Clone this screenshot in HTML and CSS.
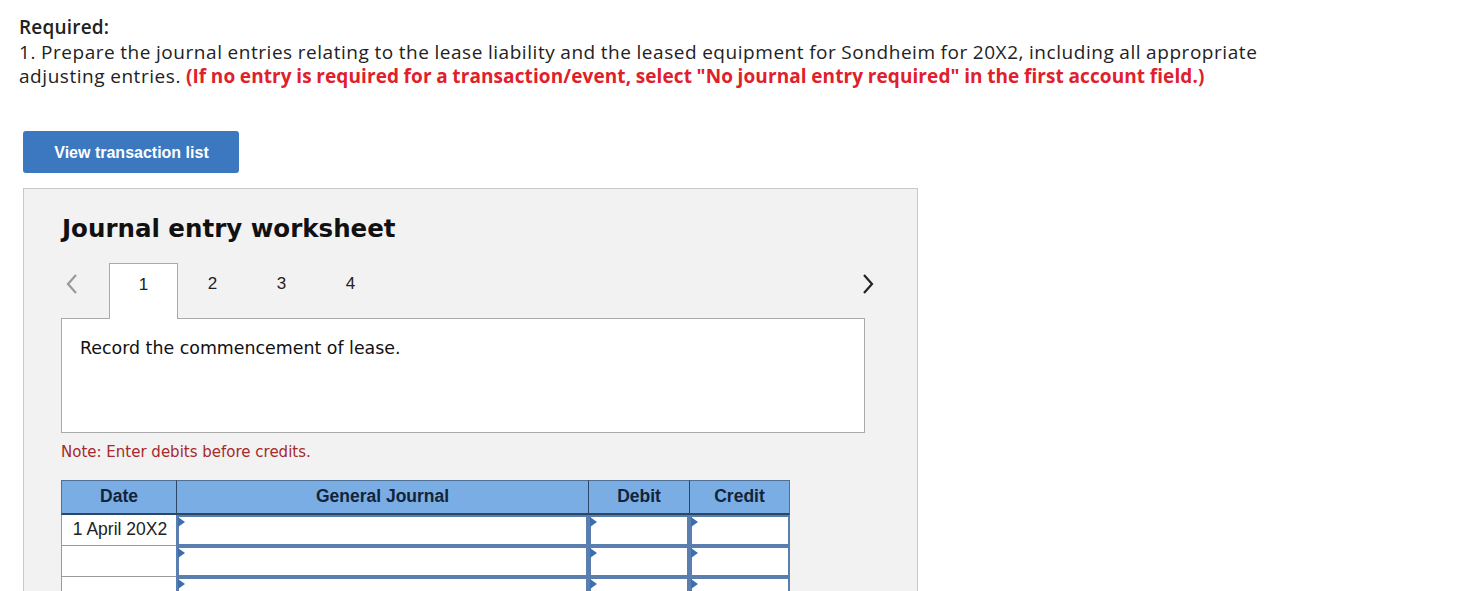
FILE: index.html
```html
<!DOCTYPE html>
<html>
<head>
<meta charset="utf-8">
<link rel="stylesheet" href="styles.css">
</head>
<body>
<div class="question">
  <div class="req">Required:</div>
  <div>1. Prepare the journal entries relating to the lease liability and the leased equipment for Sondheim for 20X2, including all appropriate<br>adjusting entries. <span class="red">(If no entry is required for a transaction/event, select "No journal entry required" in the first account field.)</span></div>
</div>
<button class="btn">View transaction list</button>
<div class="panel">
  <h2 class="title">Journal entry worksheet</h2>
  <div class="tabs">
    <span class="arrow left"><svg width="14" height="22" viewBox="0 0 14 22"><path d="M11 2 L3 11 L11 20" fill="none" stroke="#999" stroke-width="2.2"/></svg></span>
    <span class="tab active">1</span>
    <span class="tab">2</span>
    <span class="tab">3</span>
    <span class="tab">4</span>
    <span class="spacer"></span>
    <span class="arrow right"><svg width="14" height="22" viewBox="0 0 14 22"><path d="M3 2 L11 11 L3 20" fill="none" stroke="#222" stroke-width="2.2"/></svg></span>
  </div>
  <div class="desc">Record the commencement of lease.</div>
  <div class="note">Note: Enter debits before credits.</div>
  <table class="journal">
    <thead>
      <tr><th class="c-date">Date</th><th class="c-gj">General Journal</th><th class="c-amt">Debit</th><th class="c-amt">Credit</th></tr>
    </thead>
    <tbody>
      <tr><td class="date">1 April 20X2</td><td class="inp"><div class="box"><i></i></div></td><td class="inp"><div class="box"><i></i></div></td><td class="inp"><div class="box"><i></i></div></td></tr>
      <tr><td class="date"></td><td class="inp"><div class="box"><i></i></div></td><td class="inp"><div class="box"><i></i></div></td><td class="inp"><div class="box"><i></i></div></td></tr>
      <tr><td class="date"></td><td class="inp"><div class="box"><i></i></div></td><td class="inp"><div class="box"><i></i></div></td><td class="inp"><div class="box"><i></i></div></td></tr>
    </tbody>
  </table>
</div>
</body>
</html>
```
FILE: styles.css
```css
html, body { margin: 0; padding: 0; background: #fff; }
body { padding: 15px 0 0 19px; overflow: hidden; height: 591px; box-sizing: border-box; }
.question { font-family: "Open Sans", "Liberation Sans", sans-serif; font-size: 19px; line-height: 24.5px; color: #222; width: 1300px; letter-spacing: 0.55px; word-spacing: -0.5px; }
.req { font-weight: 600; letter-spacing: 0.2px; }
.red { color: #e0202a; font-weight: 700; letter-spacing: 0.1px; }
.btn { display: block; margin: 42px 0 0 4px; width: 216px; height: 42px; background: #3b78c0; color: #fff; border: none; border-radius: 3px; font-family: "Liberation Sans", Arial, sans-serif; font-weight: 700; font-size: 16px; padding: 0 0 0 1px; line-height: 44px; }
.panel { margin: 15px 0 0 4px; width: 895px; height: 420px; background: #f2f2f2; border: 1px solid #c8c8c8; box-sizing: border-box; padding: 0 52px 0 37px; }
.title { font-family: "DejaVu Sans", Verdana, sans-serif; font-weight: 700; font-size: 24.5px; margin: 24px 0 0 1px; line-height: 32px; color: #111; }
.tabs { display: flex; align-items: stretch; margin-top: 18px; margin-right: -20px; height: 56px; font-family: "Liberation Sans", Arial, sans-serif; font-size: 17px; color: #222; position: relative; z-index: 1; }
.arrow { display: flex; align-items: center; padding-bottom: 14px; }
.arrow.left { width: 48px; padding-left: 4px; box-sizing: border-box; }
.arrow.right { width: 24px; }
.tab { width: 69px; display: flex; justify-content: center; padding-top: 11px; box-sizing: border-box; }
.tab.active { background: #fff; border: 1px solid #aaa; border-bottom: none; }
.spacer { flex: 1; }
.desc { margin-top: -1px; height: 115px; background: #fff; border: 1px solid #aaa; box-sizing: border-box; padding: 19px 18px; font-family: "DejaVu Sans", Verdana, sans-serif; font-size: 17.4px; color: #111; }
.note { margin-top: 10px; font-family: "DejaVu Sans", Verdana, sans-serif; font-size: 15px; color: #a52a2a; }
.journal { margin-top: 19px; border-collapse: separate; border-spacing: 0; font-family: "Liberation Sans", Arial, sans-serif; font-size: 17.5px; width: 729px; table-layout: fixed; }
.journal th { background: #7aade3; color: #13243a; font-weight: 700; height: 35px; border-top: 1px solid #4f6f94; border-left: 1px solid #2d4666; border-bottom: 2px solid #2d4666; padding: 0; box-sizing: border-box; }
.journal th:first-child { border-left: 1px solid #4f6f94; }
.journal th:last-child { border-right: 1px solid #4f6f94; }
.c-date { width: 115px; }
.c-gj { width: 412px; }
.c-amt { width: 101px; }
.journal td { height: 31px; padding: 0; box-sizing: border-box; }
.journal td.date { background: #fff; border-left: 1px solid #999; border-bottom: 1px solid #999; text-align: center; padding-left: 2px; color: #222; }
.journal td.inp { background: #fff; }
.box { height: 31px; box-sizing: border-box; border: 2px solid #5a7fae; border-left-width: 3px; position: relative; }
.box i { position: absolute; left: -1px; top: 0; width: 0; height: 0; border-top: 5px solid transparent; border-bottom: 5px solid transparent; border-left: 7px solid #3c6fb0; }
```
